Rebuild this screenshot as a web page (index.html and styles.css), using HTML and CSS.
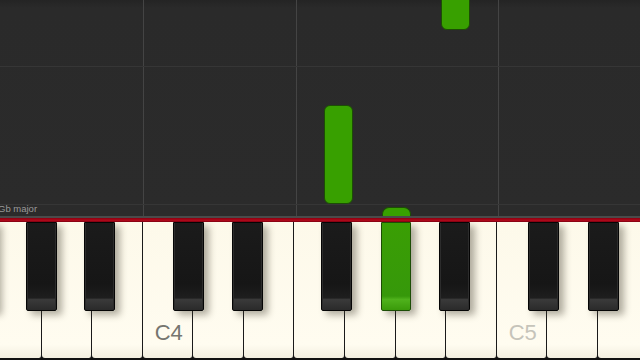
FILE: index.html
```html
<!DOCTYPE html>
<html>
<head>
<meta charset="utf-8">
<link rel="stylesheet" href="styles.css">
</head>
<body>
<div class="app">
  <div class="roll">
    <div class="vline" style="left:143px"></div>
    <div class="vline" style="left:296px"></div>
    <div class="vline" style="left:498px"></div>
    <div class="hline" style="top:66px"></div>
    <div class="hline" style="top:204px"></div>
    <div class="scale">Gb major</div>
    <div class="note" style="left:441px;top:-6px;width:29px;height:36px"></div>
    <div class="note" style="left:324px;top:105px;width:29px;height:99px"></div>
    <div class="note note-tail" style="left:382px;top:207px;width:29px;height:20px"></div>
  </div>
  <div class="rim"></div>
  <div class="redline"></div>
  <div class="keyboard">
    <div class="whites">
      <div class="wkey"></div>
      <div class="wkey"></div>
      <div class="wkey"></div>
      <div class="wkey"><span class="label">C4</span></div>
      <div class="wkey"></div>
      <div class="wkey"></div>
      <div class="wkey"></div>
      <div class="wkey"></div>
      <div class="wkey"></div>
      <div class="wkey"></div>
      <div class="wkey"><span class="label light">C5</span></div>
      <div class="wkey"></div>
      <div class="wkey"></div>
    </div>
    <div class="bkey" style="left:-34px"></div>
    <div class="bkey" style="left:26px"></div>
    <div class="bkey" style="left:84px"></div>
    <div class="bkey" style="left:173px"></div>
    <div class="bkey" style="left:232px"></div>
    <div class="bkey" style="left:321px"></div>
    <div class="bkey active" style="left:381px"></div>
    <div class="bkey" style="left:439px"></div>
    <div class="bkey" style="left:528px"></div>
    <div class="bkey" style="left:588px"></div>
  </div>
</div>
</body>
</html>
```

FILE: styles.css
```css
html, body {
  margin: 0;
  padding: 0;
  width: 640px;
  height: 360px;
  overflow: hidden;
  background: #000;
  font-family: "Liberation Sans", Arial, sans-serif;
}
.app {
  display: flex;
  flex-direction: column;
  width: 640px;
  height: 360px;
}
.roll {
  position: relative;
  height: 216px;
  flex: none;
  overflow: hidden;
  background: linear-gradient(#242424 0px, #2a2a2a 8px, #2b2b2b 100%);
}
.vline {
  position: absolute;
  top: 0;
  bottom: 0;
  width: 1px;
  background: #444;
}
.hline {
  position: absolute;
  left: 0;
  right: 0;
  height: 1px;
  background: #363636;
}
.scale {
  position: absolute;
  left: -2px;
  top: 203px;
  font-size: 9.5px;
  color: #9a9a9a;
  line-height: 12px;
}
.note {
  position: absolute;
  box-sizing: border-box;
  background: #38a000;
  border: 1px solid #1c4d05;
  border-radius: 6px;
}
.note-tail {
  border-radius: 7px 7px 0 0;
  border-bottom: none;
}
.rim {
  height: 2px;
  flex: none;
  background: #4a4a4a;
}
.redline {
  height: 4px;
  flex: none;
  background: linear-gradient(#8a0010, #b0081a 60%, #7a0010);
}
.keyboard {
  position: relative;
  flex: 1;
  overflow: hidden;
  background: #111;
}
.whites {
  display: flex;
  height: 100%;
  margin-left: -9px;
}
.wkey {
  flex: none;
  width: 50.57px;
  box-sizing: border-box;
  height: 136px;
  border-right: 1.5px solid #1a1a1a;
  border-radius: 0 0 3px 3px;
  background: linear-gradient(#fdf9ea, #fffcf0 90%, #f3efe0);
  display: flex;
  align-items: flex-end;
}
.label {
  font-size: 22px;
  line-height: 22px;
  color: #76766f;
  padding: 0 0 14px 12px;
}
.label.light {
  color: #c6c4ba;
}
.bkey {
  position: absolute;
  top: 0;
  width: 31px;
  height: 89px;
  box-sizing: border-box;
  border: 1px solid #050505;
  border-radius: 0 0 2px 2px;
  background:
    linear-gradient(#1b1b1b, #161616 70%, #1e1e1e 86%, #3a3a3a 88%, #2a2a2a 100%);
  box-shadow: 5px 4px 7px rgba(60, 55, 40, 0.4), inset 1px 0 0 #2c2c2c, inset -1px 0 0 #2c2c2c;
}
.bkey.active {
  width: 30px;
  border-color: #1c4d05;
  background: linear-gradient(#3a9e04, #36980a 84%, #4fb21c 88%, #3a9a0a 100%);
  box-shadow: 5px 4px 7px rgba(60, 55, 40, 0.4);
}
```
